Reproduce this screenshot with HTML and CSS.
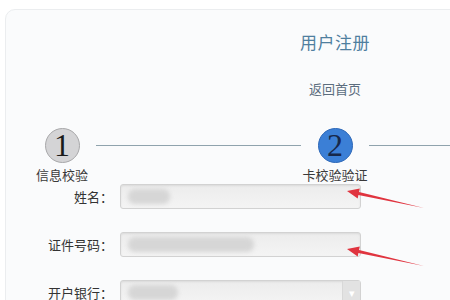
FILE: index.html
```html
<!DOCTYPE html>
<html lang="zh-CN">
<head>
    <meta charset="UTF-8">
    <title>用户注册</title>
    <link rel="stylesheet" href="styles.css">
</head>
<body>
    <div class="register-card">
        <h1 class="title">用户注册</h1>
        <a class="home-link" href="#">返回首页</a>
        <div class="steps">
            <div class="step">
                <div class="step-num done">1</div>
                <div class="step-label">信息校验</div>
            </div>
            <div class="step-line"></div>
            <div class="step">
                <div class="step-num active">2</div>
                <div class="step-label">卡校验验证</div>
            </div>
            <div class="step-line last"></div>
        </div>
        <div class="form">
            <label class="form-label">姓名：</label>
            <div class="input"><span class="blur" style="width:42px"></span></div>
            <label class="form-label">证件号码：</label>
            <div class="input"><span class="blur" style="width:126px"></span></div>
            <label class="form-label">开户银行：</label>
            <div class="input select"><span class="blur" style="width:50px"></span><span class="select-btn">▾</span></div>
        </div>
    </div>
    <svg class="arrows" width="450" height="300" viewBox="0 0 450 300">
        <g id="arrow">
            <polygon points="347,191 359.8,188.6 359,192 424,208 358.4,195 357.7,198.4" fill="#e0343f"/>
        </g>
        <use href="#arrow" transform="translate(0,58)"/>
    </svg>
</body>
</html>
```
FILE: styles.css
```css
* { margin: 0; padding: 0; box-sizing: border-box; }
body {
    font-family: "Noto Sans CJK SC", "Noto Sans", sans-serif;
    background: #fff;
    width: 450px;
    height: 300px;
    overflow: hidden;
    position: relative;
    padding: 9px 0 0 5px;
}
.register-card {
    width: 660px;
    height: 320px;
    background: #fafbfc;
    border: 1px solid #ebedef;
    border-radius: 10px;
    padding-top: 22px;
    display: flex;
    flex-direction: column;
    align-items: center;
}
.title {
    font-size: 17px;
    line-height: 20px;
    font-weight: normal;
    color: #4f7f9f;
    letter-spacing: 0.5px;
}
.home-link {
    margin-top: 29px;
    font-size: 13px;
    line-height: 15px;
    color: #5b6d7e;
    text-decoration: none;
}
.steps {
    margin-top: 32px;
    align-self: stretch;
    padding-left: 24px;
    display: flex;
    align-items: flex-start;
}
.step {
    width: 64px;
    display: flex;
    flex-direction: column;
    align-items: center;
}
.step-num {
    width: 35px;
    height: 35px;
    border-radius: 50%;
    background: #d4d4d6;
    border: 1px solid #a8a8aa;
    font-family: "Liberation Serif", serif;
    font-size: 32px;
    line-height: 33px;
    text-align: center;
    color: #1a1a1a;
}
.step-num.active { background: #3b7fd6; border-color: #2d68b8; color: #17284a; }
.step-label {
    margin-top: 4px;
    font-size: 13px;
    line-height: 15px;
    color: #3a3a3a;
    white-space: nowrap;
}
.step-line {
    width: 205px;
    height: 1px;
    margin: 17px 2px 0;
    background: #8fa3ad;
}
.step-line.last { flex: 1; margin-right: 0; }
.form {
    align-self: flex-start;
    margin-top: 2px;
    display: grid;
    grid-template-columns: 107px 241px;
    column-gap: 7px;
    row-gap: 23px;
    align-items: center;
}
.form-label {
    text-align: right;
    font-size: 13px;
    color: #333;
}
.input {
    height: 25px;
    border: 1px solid #d2d2d2;
    border-radius: 3px;
    background: linear-gradient(#ececec, #f4f4f4);
    box-shadow: inset 0 1px 2px rgba(0,0,0,0.08);
    display: flex;
    align-items: center;
    padding-left: 7px;
}
.blur {
    height: 15px;
    border-radius: 7px;
    background: #d6d6d6;
    filter: blur(2px);
}
.select { position: relative; }
.select-btn {
    margin-left: auto;
    width: 18px;
    align-self: stretch;
    background: #e2e2e2;
    border-left: 1px solid #d8d8d8;
    color: #fff;
    font-size: 11px;
    text-align: center;
    line-height: 22px;
}
.arrows {
    position: absolute;
    top: 0;
    left: 0;
    pointer-events: none;
}
```
